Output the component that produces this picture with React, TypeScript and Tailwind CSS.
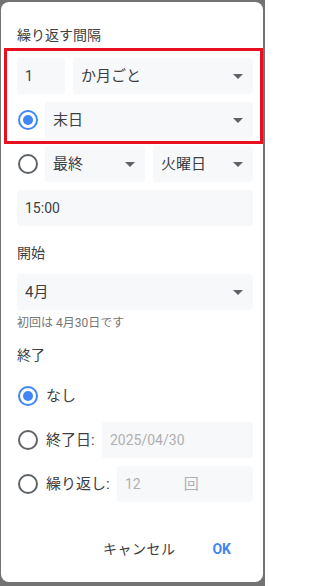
import React from "react";

const Arrow = () => (
  <svg width="10" height="5" viewBox="0 0 10 5" className="shrink-0">
    <path d="M0 0 L10 0 L5 5 Z" fill="#5f6368" />
  </svg>
);

const Select = ({ label, className = "" }: { label: string; className?: string }) => (
  <div className={`h-9 bg-[#f7f8fa] rounded-[3px] flex items-center justify-between pl-2 pr-[10px] ${className}`}>
    <span className="text-[15px] text-[#3c4043]">{label}</span>
    <Arrow />
  </div>
);

const Radio = ({ checked }: { checked?: boolean }) =>
  checked ? (
    <div className="w-5 h-5 rounded-full border-2 border-[#4285f4] flex items-center justify-center shrink-0">
      <div className="w-[10px] h-[10px] rounded-full bg-[#4285f4]" />
    </div>
  ) : (
    <div className="w-5 h-5 rounded-full border-2 border-[#5f6368] shrink-0" />
  );

export default function App() {
  return (
    <div
      className="relative w-[265px] h-[586px] bg-[#737373] overflow-hidden"
      style={{ fontFamily: 'Roboto, "Noto Sans CJK JP", sans-serif' }}
    >
      <div className="absolute left-[1px] top-[2px] w-[262px] h-[580px] bg-white rounded-lg pl-4 pr-[10px] pt-[23px] flex flex-col">
        <div className="text-[14px] leading-5 text-[#3c4043]">繰り返す間隔</div>
        <div className="mt-[13px] flex flex-col gap-2">
          <div className="flex gap-2">
            <div className="w-12 h-9 bg-[#f7f8fa] rounded-[3px] flex items-center pl-2 text-[14px] text-[#3c4043]">1</div>
            <Select label="か月ごと" className="flex-1" />
          </div>
          <div className="flex items-center gap-2">
            <div className="w-5 flex justify-center ml-[1px] mr-[-1px]"><Radio checked /></div>
            <Select label="末日" className="flex-1" />
          </div>
          <div className="flex items-center gap-2">
            <div className="w-5 flex justify-center ml-[1px] mr-[-1px]"><Radio /></div>
            <Select label="最終" className="w-[100px]" />
            <Select label="火曜日" className="flex-1" />
          </div>
          <div className="h-9 bg-[#f7f8fa] rounded-[3px] flex items-center pl-2 text-[14px] text-[#3c4043]">15:00</div>
        </div>
        <div className="mt-[17px] text-[14px] leading-5 text-[#3c4043]">開始</div>
        <Select label="4月" className="mt-[11px]" />
        <div className="mt-[5px] text-[12px] leading-4 text-[#757575]">初回は 4月30日です</div>
        <div className="mt-[14px] text-[14px] leading-5 text-[#3c4043]">終了</div>
        <div className="mt-[13px] flex flex-col gap-2">
          <div className="h-9 flex items-center gap-2">
            <div className="ml-[1px]"><Radio checked /></div>
            <span className="text-[15px] text-[#3c4043]">なし</span>
          </div>
          <div className="h-9 flex items-center">
            <div className="ml-[1px]"><Radio /></div>
            <span className="ml-2 text-[15px] text-[#3c4043]">終了日:</span>
            <div className="ml-auto w-[151px] h-9 bg-[#f7f8fa] rounded-[3px] flex items-center pl-2 text-[14px] text-[#b0b0b0]">2025/04/30</div>
          </div>
          <div className="h-9 flex items-center">
            <div className="ml-[1px]"><Radio /></div>
            <span className="ml-2 text-[15px] text-[#3c4043]">繰り返し:</span>
            <div className="ml-auto w-[136px] h-9 bg-[#f7f8fa] rounded-[3px] flex items-center pl-2 text-[14px] text-[#b0b0b0]">
              <span>12</span>
              <span className="ml-[43px] text-[15px]">回</span>
            </div>
          </div>
        </div>
        <div className="mt-[29px] h-9 flex items-center justify-end">
          <span className="text-[14px] tracking-[0.5px] text-[#3c4043] mr-[37px]">キャンセル</span>
          <span className="text-[14px] font-bold text-[#4285f4] mr-[22px]">OK</span>
        </div>
      </div>
      <div className="absolute left-[4px] top-[48px] w-[259px] h-[96px] border-[3px] border-[#e8101e]" />
    </div>
  );
}
